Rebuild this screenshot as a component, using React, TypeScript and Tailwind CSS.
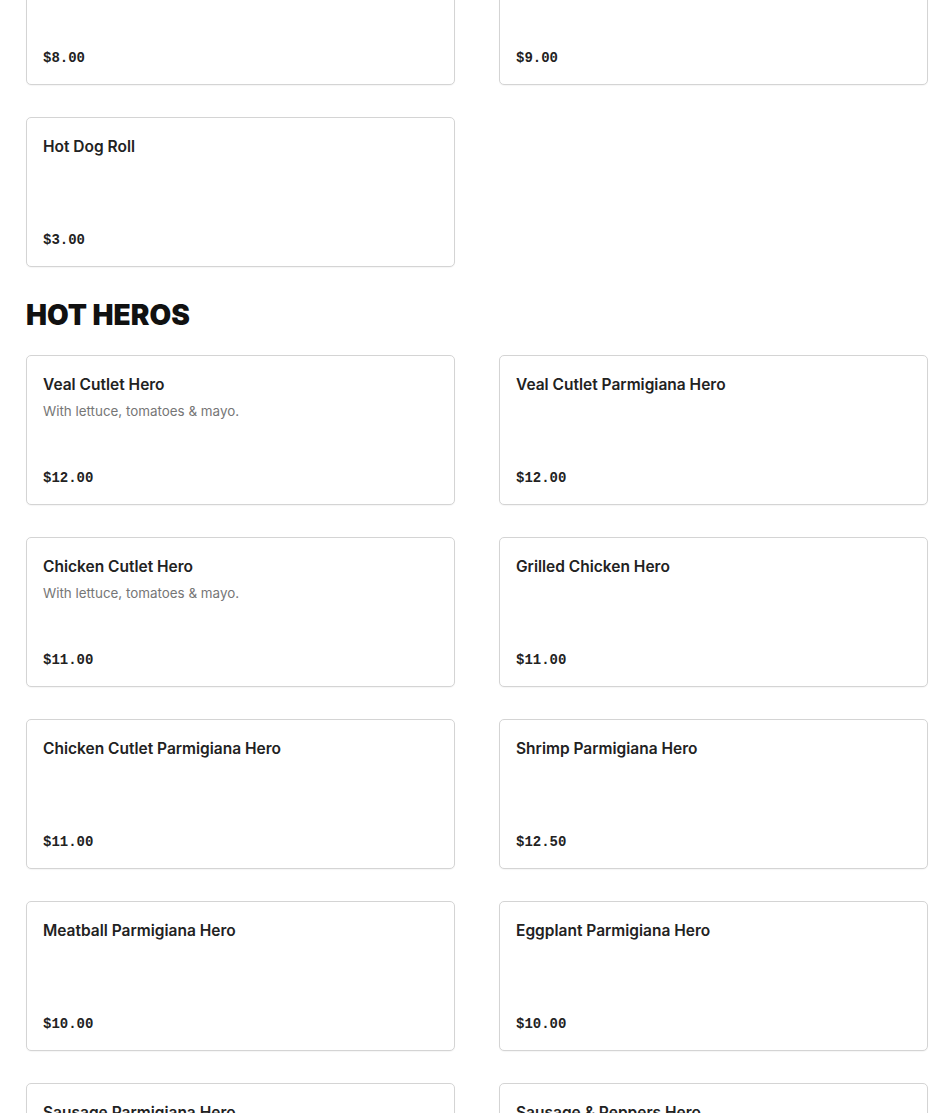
type Item = { name?: string; desc?: string; price: string };

// first row sits mostly above the fold, only the prices show
const rolls: Item[] = [{ price: "$8.00" }, { price: "$9.00" }, { name: "Hot Dog Roll", price: "$3.00" }];

const hotHeros: Item[] = [
  { name: "Veal Cutlet Hero", desc: "With lettuce, tomatoes & mayo.", price: "$12.00" },
  { name: "Veal Cutlet Parmigiana Hero", price: "$12.00" },
  { name: "Chicken Cutlet Hero", desc: "With lettuce, tomatoes & mayo.", price: "$11.00" },
  { name: "Grilled Chicken Hero", price: "$11.00" },
  { name: "Chicken Cutlet Parmigiana Hero", price: "$11.00" },
  { name: "Shrimp Parmigiana Hero", price: "$12.50" },
  { name: "Meatball Parmigiana Hero", price: "$10.00" },
  { name: "Eggplant Parmigiana Hero", price: "$10.00" },
  { name: "Sausage Parmigiana Hero", price: "$10.00" },
  { name: "Sausage & Peppers Hero", price: "$10.00" },
];

function MenuCard({ item }: { item: Item }) {
  return (
    <div className="flex h-[150px] flex-col justify-between rounded-[5px] border border-[#d4d4d4] bg-white px-4 pb-4 pt-[17px] shadow-[0_1px_1px_rgba(0,0,0,0.04)]">
      <div>
        {item.name && (
          <div className="text-[15.5px] font-semibold leading-6 text-[#222]">{item.name}</div>
        )}
        {item.desc && (
          <div className="mt-[4px] text-[13.4px] leading-5 text-[#767676]">{item.desc}</div>
        )}
      </div>
      <div className="font-['Liberation_Mono',monospace] text-[14px] font-bold leading-5 text-[#222]">
        {item.price}
      </div>
    </div>
  );
}

function Grid({ items }: { items: Item[] }) {
  return (
    <div className="grid grid-cols-2 gap-x-[44px] gap-y-[32px]">
      {items.map((it, i) => (
        <MenuCard key={i} item={it} />
      ))}
    </div>
  );
}

export default function App() {
  return (
    <div className="h-[1113px] overflow-hidden bg-white font-['Inter',sans-serif]">
      <div className="-mt-[65px] pl-[26px] pr-[22px]">
        <Grid items={rolls} />
        <h2 className="mb-[22px] mt-[30px] text-[28px] font-black uppercase leading-9 text-[#111]">
          Hot Heros
        </h2>
        <Grid items={hotHeros} />
      </div>
    </div>
  );
}
